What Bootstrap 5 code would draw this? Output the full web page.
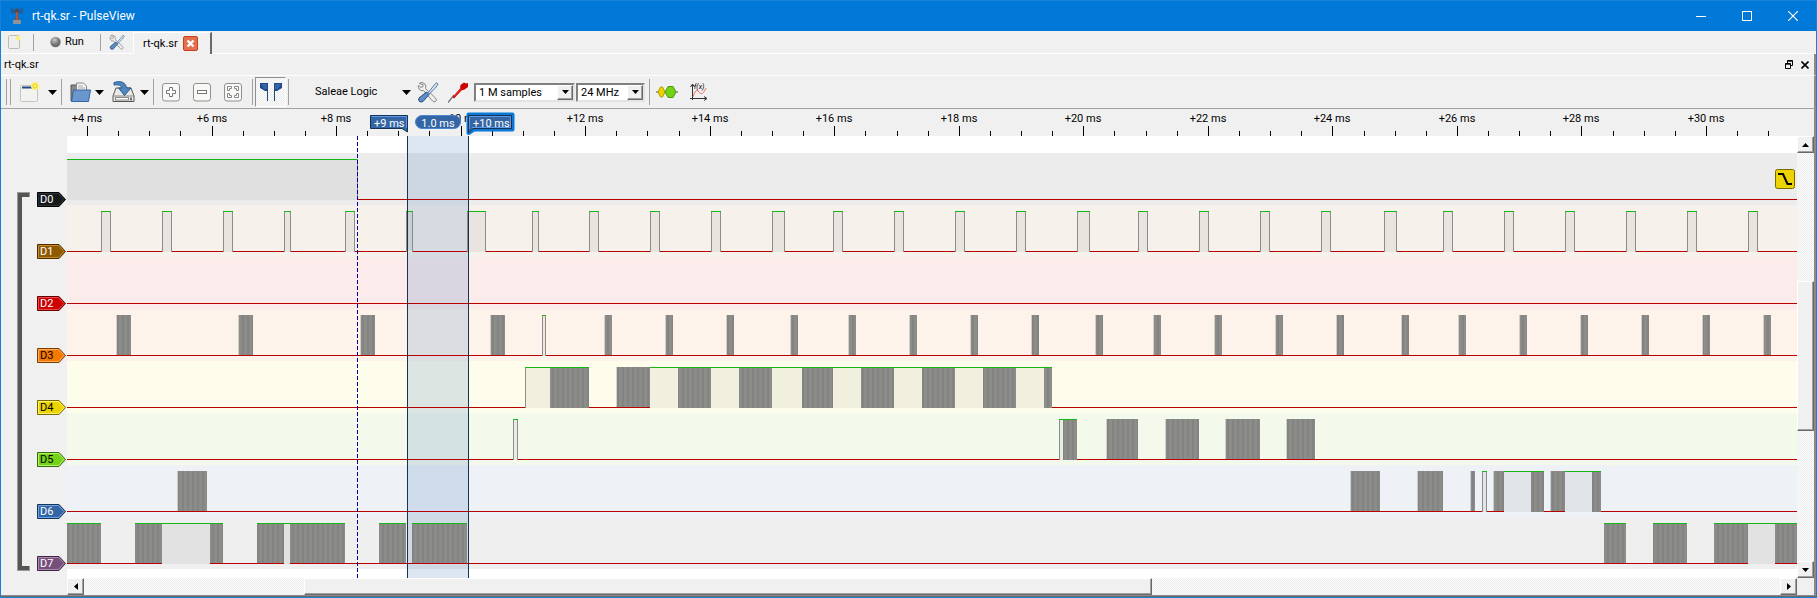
<!DOCTYPE html>
<html lang="en">
<head>
<meta charset="utf-8">
<meta name="viewport" content="width=device-width, initial-scale=1">
<title>rt-qk.sr - PulseView</title>
<link rel="stylesheet" href="https://cdn.jsdelivr.net/npm/bootstrap@5.3.0/dist/css/bootstrap.min.css">
<style>
  body { font-family: Roboto, "Open Sans", sans-serif; font-size: 11px; line-height: 14px; color: #000; background: #f0f0f0; border: 1px solid #1a7fd6; border-top-width: 0; overflow-x: hidden; }
  button, select { font: inherit; color: inherit; }
  svg { display: block; }
  .titlebar { height: 31px; background: #0078d7; border-top: 1px solid #1a84dc; color: #fff; font-size: 12px; padding-left: 9px; }
  .win-btn { width: 46px; height: 30px; background: none; border: 0; padding: 0; color: #fff; }
  .flat { background: none; border: 0; padding: 0; }
  .vsep { width: 1px; background: #a0a0a0; flex: none; }
  .tabs { height: 23px; border-bottom: 1px solid #fff; padding-left: 7px; }
  .tabs .vsep { height: 17px; }
  .tabs .vsep.first { margin-left: 12px; }
  .session-tab { align-self: stretch; margin: 1px 0 -1px; border-left: 1px solid #fff; border-top: 1px solid #fff; border-right: 2px solid #696969; background: #f0f0f0; padding: 0 12px 0 9px; width: 79px; white-space: nowrap; }
  .docktitle { height: 22px; border-bottom: 1px solid #fff; padding: 0 5px 0 3px; }
  .tools { height: 33px; border-bottom: 1px solid #a0a0a0; padding-left: 5px; }
  .tools .vsep { height: 26px; }
  .zoom-set { gap: 13px; margin-right: 10px; }
  .grip { width: 5px; height: 26px; border: solid #a0a0a0; border-width: 0 1px; }
  .toggled { width: 31px; height: 30px; margin: 0 2px; border: 1px solid #909090; border-right-color: #fff; border-bottom-color: #fff; }
  .device { width: 96px; margin: 0 6px 0 26px; }
  .probe { margin: 0 6px 0 9px; }
  .decoder { margin: 0 12px 0 6px; }
  .dither { background-color: #fff; background-image: conic-gradient(#ececec 25%, #fdfdfd 0 50%, #ececec 0 75%, #fdfdfd 0); background-size: 2px 2px; }
  .combo { position: relative; height: 19px; border: 2px solid; border-color: #808080 #e3e3e3 #e3e3e3 #808080; background: #fff; }
  .combo.samples { width: 101px; margin-right: 1px; }
  .combo.rate { width: 69px; }
  .combo select { appearance: none; width: 100%; height: 15px; border: 0; background: none; padding: 0 0 0 3px; line-height: 15px; display: block; }
  .combo .arrow { position: absolute; top: 0; right: 0; width: 16px; height: 15px; pointer-events: none; }
  .raised { background: #f0f0f0; border: 1px solid; border-color: #fff #696969 #696969 #fff; box-shadow: inset -1px -1px #a0a0a0; padding: 0; display: flex; align-items: center; justify-content: center; flex: none; }
  .gutter { width: 66px; flex: none; }
  .ruler { height: 27px; }
  .lane-head { padding: 56px 0 0 16px; }
  .group { width: 13px; border: solid #555753; border-width: 5px 0 5px 5px; outline: 1px solid #9a9a9a; outline-offset: -1px; clip-path: polygon(0 0, 100% 0, 100% 5px, 5px 5px, 5px calc(100% - 5px), 100% calc(100% - 5px), 100% 100%, 0 100%); }
  .lane-tags { gap: 37px; margin-left: 7px; }
  .tag { width: 30px; height: 15px; position: relative; border: 0; padding: 0 0 0 3px; background: none; text-align: left; line-height: 15px; }
  .tag svg { position: absolute; left: 0; top: 0; }
  .tag span { position: relative; }
  .view { height: 442px; position: relative; background: #fff; overflow: hidden; }
  .trigger { position: absolute; right: 2px; top: 33px; }
  .vbar { width: 17px; flex: none; }
  .vbar .raised, .hbar .end { width: 17px; height: 17px; }
  .vbar .thumb { height: 150px; }
  .vbar .lead-in { height: 128px; }
  .vbar .track { height: 442px; }
  .hbar { height: 17px; }
  .hbar .lead-in { width: 13%; }
  .hbar .thumb { width: 50%; }
  .edge-r { border-right: 2px solid #8a8a8a; }
  .bottom-edge { height: 2px; background: #8a8a8a; border-bottom: 1px solid #696969; }
</style>
</head>
<body class="d-flex flex-column min-vh-100">

<header class="titlebar d-flex align-items-center">
  <svg width="14" height="18" viewBox="0 0 14 18"><path d="M2 1q-2 3 1 6M4 2q-1 2 0 4M12 1q2 3-1 6M10 2q1 2 0 4" fill="none" stroke="#3c4c62"/><circle cx="7" cy="4" r="2.5" fill="#4d4a55"/><path d="M7 6L4 14h6z" fill="#6c5a58"/><path d="M7 5v8" stroke="#c8502c" stroke-width="1.5"/><rect x="3" y="13" width="8" height="4" rx="1" fill="#8f9498"/></svg>
  <span class="ms-2 flex-grow-1">rt-qk.sr - PulseView</span>
  <button class="win-btn" aria-label="Minimize"><svg class="mx-auto" width="10" height="10"><path d="M0 5.5h10" stroke="#fff"/></svg></button>
  <button class="win-btn" aria-label="Maximize"><svg class="mx-auto" width="10" height="10"><rect x=".5" y=".5" width="9" height="9" fill="none" stroke="#fff"/></svg></button>
  <button class="win-btn" aria-label="Close"><svg class="mx-auto" width="10" height="10"><path d="M0 0l10 10M10 0L0 10" stroke="#fff" stroke-width="1.2"/></svg></button>
</header>

<nav class="tabs d-flex align-items-center">
  <button class="flat" aria-label="New session"><svg width="13" height="14"><rect x=".5" y=".5" width="11" height="13" rx="1" fill="#eeeeec" stroke="#babdb6"/><circle cx="10" cy="3" r="2.5" fill="#f7ee8a"/></svg></button>
  <span class="vsep first me-3"></span>
  <button class="flat d-flex align-items-center gap-1"><svg width="11" height="12"><defs><radialGradient id="ball" cx=".4" cy=".3"><stop offset="0" stop-color="#c8c8c8"/><stop offset="1" stop-color="#6e6e6e"/></radialGradient></defs><circle cx="5.500" cy="6" r="5.200" fill="url(#ball)"/></svg>Run</button>
  <span class="vsep ms-3"></span>
  <button class="flat ms-2 me-2" aria-label="Settings"><svg width="16" height="16" viewBox="0 0 22 22"><use href="#toolsIcon"/></svg></button>
  <div class="session-tab d-flex align-items-center justify-content-between">rt-qk.sr
    <button class="flat" aria-label="Close session"><svg width="15" height="15"><rect x=".5" y=".5" width="14" height="14" rx="1.500" fill="#e2714f" stroke="#cc3d18"/><path d="M4.500 4.500l6 6M10.500 4.500l-6 6" stroke="#fff" stroke-width="2.400"/></svg></button>
  </div>
</nav>

<div class="docktitle edge-r d-flex align-items-center">
  <span class="flex-grow-1">rt-qk.sr</span>
  <button class="flat me-2" aria-label="Float"><svg width="8" height="9"><path d="M2.500 3V.5h5v5H6M2 1.200h6" fill="none" stroke="#000"/><path d="M.5 3.500h5v5h-5zM0 4.200h6" fill="none" stroke="#000"/></svg></button>
  <button class="flat" aria-label="Close view"><svg width="8" height="8"><path d="M.5.5l7 7M7.500.5l-7 7" stroke="#000" stroke-width="1.600"/></svg></button>
</div>

<div class="tools edge-r d-flex align-items-center">
  <span class="grip"></span>
  <button class="flat d-flex align-items-center gap-2 ms-2" aria-label="New view"><svg width="21" height="20"><rect x="1.500" y="3.500" width="17" height="16" rx="1" fill="#f2f2ef" stroke="#c3c5c0"/><path d="M3 5.500h12" stroke="#204a87" stroke-width="2"/><circle cx="16" cy="4" r="4" fill="#fbf06a"/><circle cx="16" cy="4" r="2" fill="#fff08a" stroke="#e8cf1a"/></svg><svg width="9" height="5"><path d="M0 0h9L4.500 5z"/></svg></button>
  <span class="vsep ms-1 me-2"></span>
  <button class="flat d-flex align-items-center gap-1" aria-label="Open"><svg width="21" height="20" viewBox="0 0 21 20"><path d="M1 3h6v16H1z" fill="#888a85" stroke="#555753"/><path d="M6.500 10V1h7l3 3v7" fill="#f4f4f2" stroke="#888a85"/><path d="M8 4h5M8 6h7" stroke="#a9aba6"/><path d="M3.500 8h17l-2 11.500h-17z" fill="#6a98ce" stroke="#3465a4"/></svg><svg width="9" height="5"><path d="M0 0h9L4.500 5z"/></svg></button>
  <button class="flat d-flex align-items-center gap-1 ms-2" aria-label="Save"><svg width="24" height="22" viewBox="0 0 24 22"><path d="M4 7h15l3 8v5.500H1V15z" fill="#e9e9e6" stroke="#555753"/><path d="M1.500 15h20" stroke="#888a85"/><rect x="3.500" y="16.500" width="13" height="2.500" fill="#fff" stroke="#888a85"/><path d="M19 16.500v3" stroke="#000"/><path d="M2 1.500Q12-2 15 7h4l-6.500 7.500L6.500 7H10Q9 3 2 4z" fill="#4f86bd" stroke="#2c5d94"/></svg><svg width="9" height="5"><path d="M0 0h9L4.500 5z"/></svg></button>
  <span class="vsep ms-1 me-2"></span>
  <span class="zoom-set d-flex">
    <button class="flat" aria-label="Zoom in"><svg width="18" height="19"><rect x=".5" y=".5" width="17" height="17.500" rx="2.500" fill="#f8f8f7" stroke="#8f918c"/><path d="M7.500 4.500h3v3h3v3h-3v3h-3v-3h-3v-3h3z" fill="#fff" stroke="#777"/></svg></button>
    <button class="flat" aria-label="Zoom out"><svg width="18" height="19"><rect x=".5" y=".5" width="17" height="17.500" rx="2.500" fill="#f8f8f7" stroke="#8f918c"/><rect x="4.500" y="7.500" width="9" height="3" fill="#fff" stroke="#777"/></svg></button>
    <button class="flat" aria-label="Zoom to fit"><svg width="18" height="19"><rect x=".5" y=".5" width="17" height="17.500" rx="2.500" fill="#f8f8f7" stroke="#8f918c"/><path d="M3.500 7.500v-4h4v2h-2v2zM10.500 3.500h4v4h-2v-2h-2zM3.500 10.500v4h4v-2h-2v-2zM14.500 10.500v4h-4v-2h2v-2z" fill="#fff" stroke="#888"/></svg></button>
  </span>
  <span class="vsep"></span>
  <button class="toggled dither p-0" aria-label="Show cursors"><svg class="mx-auto" width="22" height="18"><path d="M0 0h8v18H7V8H5L0 5zM14 18V0h8v5l-5 3h-2v10z" fill="#204a87"/><path d="M1 1h6v5H4zM15 1h6L18 6h-3z" fill="#3465a4"/></svg></button>
  <span class="vsep"></span>
  <button class="device flat d-flex align-items-center justify-content-between">Saleae Logic<svg width="9" height="5"><path d="M0 0h9L4.500 5z"/></svg></button>
  <button class="flat" aria-label="Configure device"><svg width="22" height="22" viewBox="0 0 22 22"><g id="toolsIcon"><path d="M2 2.500Q5 0 8 3q1.500 2 .5 4.500l10 9.500q2 2.500 0 3.500t-3-.5L6.500 9.500Q3.500 10.500 2 8q-1-1.500-.6-3.500L4 6.500 6 5.500V3.500z" fill="#eeeeec" stroke="#888a85"/><path d="M19.500 1.500l1.500 1.500-2.500 4-7 6.500-1-1 6-7.500z" fill="#d8e2ee" stroke="#5d7fa8"/><path d="M9.500 11l2.500 2.500-6 7q-2 1-3.500 0t-.5-3.500z" fill="#5e8ec4" stroke="#23497d"/></g></svg></button>
  <button class="probe flat" aria-label="Configure channels"><svg width="20" height="21"><path d="M0 20.500L6 13" stroke="#777" stroke-width="1.400"/><path d="M4.500 15L12 6.500 12.500 3 16 .5 18 1.500 20 1v4l-3.500 2.500-3 1L6 16.500z" fill="#cc0000"/><path d="M6 14.500l7.500-8" stroke="#ef4040"/></svg></button>
  <div class="combo samples"><select aria-label="Sample count"><option>1 M samples</option></select><span class="raised arrow"><svg width="7" height="4"><path d="M0 0h7L3.500 4z"/></svg></span></div>
  <div class="combo rate"><select aria-label="Sample rate"><option>24 MHz</option></select><span class="raised arrow"><svg width="7" height="4"><path d="M0 0h7L3.500 4z"/></svg></span></div>
  <span class="vsep ms-1"></span>
  <button class="decoder flat" aria-label="Add decoder"><svg width="22" height="12"><path d="M0 6h22" stroke="#555"/><path d="M2 6l2.500-5h2L9 6l-2.500 5h-2z" fill="#edd400" stroke="#b39b00"/><path d="M9 6l3-5.500h5L20 6l-3 5.500h-5z" fill="#73d216" stroke="#4e9a06"/></svg></button>
  <button class="flat" aria-label="Add math signal"><svg width="18" height="18"><path d="M2.500 17V2M0 15.500h16M.5 4l2-3 2 3M14 13.500l3 2-3 2" fill="none" stroke="#333"/><path d="M3 14Q6 4 9 9t7-4" fill="none" stroke="#ee7766"/><text x="4" y="6" font-size="7" font-style="italic">f(x)</text></svg></button>
</div>

<main class="d-flex flex-grow-1 edge-r">
  <div class="gutter">
    <div class="ruler"></div>
    <div class="lane-head d-flex">
      <div class="group"></div>
      <div class="lane-tags d-flex flex-column" id="tags"></div>
    </div>
  </div>
  <div class="flex-grow-1 overflow-hidden">
    <svg id="ruler" class="ruler overflow-visible" width="100%" height="27"></svg>
    <div class="view">
      <svg id="waves" width="100%" height="442" shape-rendering="crispEdges"></svg>
      <svg class="trigger" width="20" height="20"><rect x=".5" y=".5" width="19" height="19" rx="2" fill="#edd400" stroke="#766a00"/><path d="M3 5h5l4.500 10H17" fill="none" stroke="#000" stroke-width="2"/></svg>
    </div>
    <div class="hbar dither d-flex">
      <button class="raised end" aria-label="Scroll left"><svg width="4" height="7"><path d="M4 0v7L0 3.500z"/></svg></button>
      <div class="d-flex flex-grow-1"><span class="lead-in"></span><span class="raised thumb"></span></div>
      <button class="raised end" aria-label="Scroll right"><svg width="4" height="7"><path d="M0 0v7l4-3.500z"/></svg></button>
    </div>
  </div>
  <div class="vbar">
    <div class="ruler"></div>
    <div class="track dither d-flex flex-column">
      <button class="raised" aria-label="Scroll up"><svg width="7" height="4"><path d="M0 4h7L3.500 0z"/></svg></button>
      <div class="d-flex flex-column flex-grow-1"><span class="lead-in"></span><span class="raised thumb"></span></div>
      <button class="raised" aria-label="Scroll down"><svg width="7" height="4"><path d="M0 0h7L3.500 4z"/></svg></button>
    </div>
  </div>
</main>
<div class="bottom-edge"></div>

<script src="https://cdn.jsdelivr.net/npm/bootstrap@5.3.0/dist/js/bootstrap.bundle.min.js"></script>
<script>
const GUTTER = 67, LANE = 52, TOP = 17;

// Segment kinds: p pulse, e rising edge, l steady high, b burst, g burst with high cap, n burst inside a high run
const pulses = (kind, width, xs) => xs.map(x => Array.isArray(x) ? [kind, ...x] : [kind, x, x + width]);
const channels = [
  { name: 'D0', bg: '#ececec', tag: ['#161a1b', '#2e3436', '#000', '#fff'], segs: [['l', 67, 357]] },
  { name: 'D1', bg: '#f6f1eb', tag: ['#8f5902', '#c98a28', '#4a2e00', '#fff'],
    segs: pulses('p', 10, [101, 162, 223, [284, 291], 345, [406, 413], [467, 486], [532, 539], 589, 650, 711, [772, 785], 833, 894, 955, 1016, [1077, 1090], 1138, 1199, 1260, 1321, [1384, 1397], 1443, 1504, 1565, 1626, 1687, 1748]) },
  { name: 'D2', bg: '#fbebeb', tag: ['#cc0000', '#f04848', '#660000', '#fff'], segs: [] },
  { name: 'D3', bg: '#fef3eb', tag: ['#f57900', '#ffad5c', '#7a3c00', '#000'],
    segs: [...pulses('b', 14, [117, 239, 361, 491]), ['p', 542, 546],
      ...pulses('b', 7, [605, 666, 727, 791, 849, 910, 971, 1032, 1096, 1154, 1215, 1276, 1337, 1402, 1459, 1520, 1581, 1642, 1703, 1764])] },
  { name: 'D4', bg: '#fefdeb', tag: ['#edd400', '#fff36b', '#766a00', '#000'],
    segs: [['e', 525, 526], ['l', 526, 550], ['n', 550, 589], ['b', 617, 650], ['l', 650, 678], ['n', 678, 711], ['l', 711, 739], ['n', 739, 772], ['l', 772, 802], ['n', 802, 833], ['l', 833, 861], ['n', 861, 894], ['l', 894, 922], ['n', 922, 955], ['l', 955, 983], ['n', 983, 1016], ['l', 1016, 1044], ['n', 1044, 1052]] },
  { name: 'D5', bg: '#f4faeb', tag: ['#73d216', '#b0f56c', '#39690b', '#000'],
    segs: [['p', 513, 518], ['e', 1059, 1060], ['l', 1060, 1063], ['n', 1063, 1077], ['b', 1107, 1138], ['b', 1166, 1199], ['b', 1226, 1260], ['b', 1287, 1315]] },
  { name: 'D6', bg: '#eef2f7', tag: ['#3465a4', '#6aa5f0', '#1a3252', '#fff'],
    segs: [['b', 178, 207], ['b', 1351, 1380], ['b', 1418, 1443], ['b', 1471, 1475], ['p', 1482, 1487], ['b', 1494, 1504], ['l', 1504, 1531], ['n', 1531, 1544], ['b', 1551, 1565], ['l', 1565, 1592], ['n', 1592, 1601]] },
  { name: 'D7', bg: '#efefef', tag: ['#75507b', '#b088b6', '#3a283d', '#fff'],
    segs: [['g', 67, 101], ['g', 135, 162], ['l', 162, 210], ['g', 210, 223], ['g', 257, 284], ['l', 284, 290], ['g', 290, 345], ['g', 379, 406], ['g', 412, 467], ['g', 1604, 1626], ['g', 1653, 1687], ['g', 1714, 1748], ['l', 1748, 1775], ['g', 1775, 1797]] }
];
const rect = (x, y, w, h, fill) => `<rect x="${x}" y="${y}" width="${w}" height="${h}" fill="${fill}"/>`;

let back = '', front = '';
channels.forEach((c, i) => {
  const y = TOP + i * LANE, hi = y + 6, lo = y + 46;
  back += rect(0, y, '100%', LANE, c.bg);
  front += rect(0, lo, '100%', 1, '#b80000');
  for (const [kind, a, b] of c.segs) {
    const x = a - GUTTER, w = b - a;
    if ('pln'.includes(kind)) front += rect(x, lo, w, 1, c.bg);
    if ('pl'.includes(kind)) front += rect(x, hi, w, 41, 'rgba(0,0,0,.05)');
    if (kind === 'p') front += rect(x, hi, 1, 41, '#8c8c8c') + rect(x + w - 1, hi, 1, 41, '#8c8c8c');
    if (kind === 'e') front += rect(x, hi, 1, 41, '#8c8c8c');
    if ('bgn'.includes(kind)) front += rect(x, hi, w, kind === 'n' ? 41 : 40, 'url(#burst)');
    if (kind === 'b') front += rect(x - 1, hi, 1, 40, 'rgba(120,120,120,.3)');
    if (kind !== 'b') front += rect(x, hi, w, 1, '#14b814');
  }
});
document.getElementById('waves').innerHTML =
  `<defs><pattern id="burst" width="5" height="4" patternUnits="userSpaceOnUse"><rect width="5" height="4" fill="#8c8c89"/><rect width="2" height="4" fill="#838383"/></pattern></defs>` +
  back + rect(341, 0, 60, 442, 'rgba(52,110,180,.17)') + front + rect(290, 23, 1, 40, '#8c8c8c') +
  `<path d="M290.500 0V442" stroke="#0000a8" stroke-dasharray="4 2"/>` +
  rect(340, 0, 1, 442, '#1a3252') + rect(401, 0, 1, 442, '#1a3252');

// Time ruler: a labelled tick every 2 ms, a minor tick every 0.5 ms
let ticks = '';
for (let k = 0; k < 56; k++) {
  const x = Math.round(20 + k * 31.135), major = k % 4 === 0;
  ticks += rect(x, major ? 17 : 22, 1, major ? 10 : 5, '#000');
  if (major) ticks += `<text x="${x}" y="13" text-anchor="middle">+${4 + k / 2} ms</text>`;
}
ticks += `<path d="M303.500 6.500H340.500V23L335 19.500H303.500z" fill="#3465a4" stroke="#1a3252"/><path d="M304.500 7.500H339.500V19" fill="none" stroke="#5f9ae8"/>
  <text x="307" y="18" fill="#fff">+9 ms</text>
  <rect x="348.500" y="6.500" width="45" height="13" rx="6.500" fill="#3465a4" stroke="#4a86d0"/><text x="371" y="18" fill="#fff" text-anchor="middle">1.0 ms</text>
  <path d="M401.500 5.500H445.500V20.500H407L401.500 24z" fill="#3465a4" stroke="#0a78d7" stroke-width="4" stroke-linejoin="round"/><path d="M401.500 6.500H444.500V19.500H406L401.500 24z" fill="#3465a4" stroke="#1a3252"/><path d="M402.500 20V7.500H443.500V18.500H405" fill="none" stroke="#5f9ae8"/>
  <text x="406" y="18" fill="#fff">+10 ms</text>`;
document.getElementById('ruler').innerHTML = ticks;

document.getElementById('tags').innerHTML = channels.map(({ name, tag: [fill, light, edge, ink] }) =>
  `<button class="tag" style="color:${ink}"><svg width="30" height="15"><path d="M.5.5H22L28.500 7.500 22 14.500H.5z" fill="${fill}" stroke="${edge}"/><path d="M1.500 1.500H21.500L27 7.500 21.500 13.500H1.500z" fill="none" stroke="${light}"/></svg><span>${name}</span></button>`).join('');
</script>
</body>
</html>
